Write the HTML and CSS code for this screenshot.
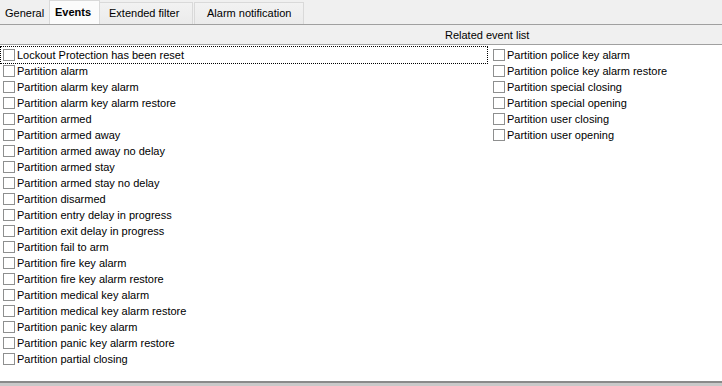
FILE: index.html
```html
<!DOCTYPE html>
<html>
<head>
<meta charset="utf-8">
<link rel="stylesheet" href="styles.css">
</head>
<body>
<div class="window">
  <div class="tabs">
    <div class="tab first">General</div>
    <div class="tab active">Events</div>
    <div class="tab ext">Extended filter</div>
    <div class="tab wide">Alarm notification</div>
  </div>
  <div class="header"><span class="header-text">Related event list</span></div>
  <div class="list">
    <div class="col col1">
      <div class="item focus"><span class="box"></span>Lockout Protection has been reset</div>
      <div class="item"><span class="box"></span>Partition alarm</div>
      <div class="item"><span class="box"></span>Partition alarm key alarm</div>
      <div class="item"><span class="box"></span>Partition alarm key alarm restore</div>
      <div class="item"><span class="box"></span>Partition armed</div>
      <div class="item"><span class="box"></span>Partition armed away</div>
      <div class="item"><span class="box"></span>Partition armed away no delay</div>
      <div class="item"><span class="box"></span>Partition armed stay</div>
      <div class="item"><span class="box"></span>Partition armed stay no delay</div>
      <div class="item"><span class="box"></span>Partition disarmed</div>
      <div class="item"><span class="box"></span>Partition entry delay in progress</div>
      <div class="item"><span class="box"></span>Partition exit delay in progress</div>
      <div class="item"><span class="box"></span>Partition fail to arm</div>
      <div class="item"><span class="box"></span>Partition fire key alarm</div>
      <div class="item"><span class="box"></span>Partition fire key alarm restore</div>
      <div class="item"><span class="box"></span>Partition medical key alarm</div>
      <div class="item"><span class="box"></span>Partition medical key alarm restore</div>
      <div class="item"><span class="box"></span>Partition panic key alarm</div>
      <div class="item"><span class="box"></span>Partition panic key alarm restore</div>
      <div class="item"><span class="box"></span>Partition partial closing</div>
    </div>
    <div class="col col2">
      <div class="item"><span class="box"></span>Partition police key alarm</div>
      <div class="item"><span class="box"></span>Partition police key alarm restore</div>
      <div class="item"><span class="box"></span>Partition special closing</div>
      <div class="item"><span class="box"></span>Partition special opening</div>
      <div class="item"><span class="box"></span>Partition user closing</div>
      <div class="item"><span class="box"></span>Partition user opening</div>
    </div>
  </div>
  <div class="bottom"></div>
</div>
</body>
</html>
```
FILE: styles.css
```css
html, body {
  margin: 0;
  padding: 0;
}
body {
  width: 722px;
  height: 386px;
  overflow: hidden;
  background: #f0f0f0;
  font-family: "Liberation Sans", Arial, sans-serif;
  font-size: 11px;
  color: #000;
}
.window {
  display: flex;
  flex-direction: column;
  height: 386px;
}
.tabs {
  display: flex;
  height: 24px;
  background: #f0f0f0;
  align-items: flex-end;
}
.tab {
  height: 22px;
  box-sizing: border-box;
  line-height: 21px;
  font-size: 11px;
  border: 1px solid #d9d9d9;
  border-bottom: none;
  background: linear-gradient(#f2f2f2, #ebebeb);
  white-space: nowrap;
}
.tab.first {
  width: 49px;
  padding-left: 4px;
  border-color: transparent;
  background: #f0f0f0;
}
.tab.active {
  width: 51px;
  height: 24px;
  background: #fbfbfb;
  font-weight: bold;
  padding-left: 5px;
  line-height: 23px;
}
.tab.ext {
  width: 93px;
  padding-left: 9px;
  border-left: none;
  margin-right: 1px;
}
.tab.wide {
  width: 110px;
  padding-left: 12px;
}
.header {
  height: 21px;
  box-sizing: border-box;
  border-top: 1px solid #a0a0a0;
  border-bottom: 1px solid #a0a0a0;
  background: #f0f0f0;
  display: flex;
  align-items: center;
  padding-left: 445px;
  font-size: 11px;
}
.list {
  flex: 1;
  background: #fff;
  display: flex;
  padding-top: 2px;
}
.col1 {
  width: 488px;
}
.col2 {
  flex: 1;
}
.item {
  height: 16px;
  display: flex;
  align-items: center;
  font-size: 11px;
  white-space: nowrap;
  box-sizing: border-box;
}
.col1 .item {
  padding-left: 3px;
}
.col2 .item {
  padding-left: 5px;
}
.col1 .item.focus {
  outline: 1px dotted #000;
  outline-offset: 0;
  margin: 0 1px;
  padding-left: 2px;
}
.box {
  width: 12px;
  height: 12px;
  box-sizing: border-box;
  border: 1px solid #8e8f8f;
  background: #fff;
  margin-right: 2px;
  flex: none;
}
.bottom {
  height: 5px;
  box-sizing: border-box;
  border-top: 2px solid #8a8a8a;
  background: #c9c9c9;
}
```
